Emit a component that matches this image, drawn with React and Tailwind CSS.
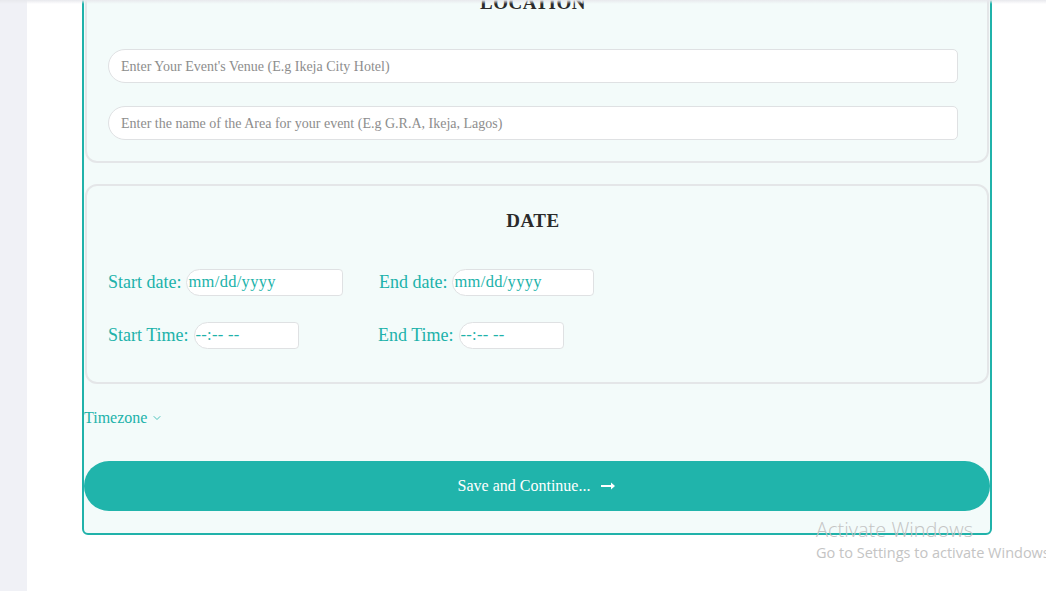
import { ChevronDown } from 'lucide-react';

const serif = { fontFamily: '"Liberation Serif", "Times New Roman", serif' };

function TextBox({ placeholder }) {
  return (
    <div className="w-[850px] h-[34px] bg-white border border-[#dfe1e3] rounded-l-[17px] rounded-r-[5px] flex items-center pl-[12px] text-[14px] text-[#8d8d8d]">
      {placeholder}
    </div>
  );
}

function Field({ label, value, inputWidth, className }) {
  return (
    <div className={`flex items-center ${className}`}>
      <span className="text-[18px] text-[#20b2aa] mr-[5px]">{label}</span>
      <div
        className="h-[27px] bg-white border border-[#dfe1e3] rounded-l-[14px] rounded-r-[4px] flex items-center pl-[1px] text-[16.5px] tracking-[0.3px] text-[#20b2aa]"
        style={{ width: inputWidth }}
      >
        {value}
      </div>
    </div>
  );
}

export default function App() {
  return (
    <div className="relative w-[1046px] h-[591px] overflow-hidden flex bg-white" style={serif}>
      <div className="w-[27px] shrink-0 bg-[#f0f1f6]" />
      <div className="flex-1 pl-[55px]">
        <div className="w-[910px] -mt-[40px] border-2 border-[#20b2aa] rounded-[6px] bg-[#f3fbfa] flex flex-col pb-[22px]">
          {/* location */}
          <section className="mx-[1px] border-2 border-[#e4e6e8] rounded-[12px] pt-[28px] pb-[21px]">
            <h2 className="pr-[8px] text-center text-[19px] leading-[22px] font-bold text-[#2b2b2b] tracking-wide">LOCATION</h2>
            <div className="mt-[35px] pl-[21px] flex flex-col gap-[23px]">
              <TextBox placeholder="Enter Your Event's Venue (E.g Ikeja City Hotel)" />
              <TextBox placeholder="Enter the name of the Area for your event (E.g G.R.A, Ikeja, Lagos)" />
            </div>
          </section>

          {/* date */}
          <section className="mx-[1px] mt-[21px] border-2 border-[#e4e6e8] rounded-[12px] pt-[24px] pb-[33px]">
            <h2 className="pr-[8px] text-center text-[19px] leading-[22px] font-bold text-[#2b2b2b] tracking-wide">DATE</h2>
            <div className="pl-[21px]">
              <div className="mt-[37px] flex items-center">
                <Field label="Start date:" value="mm/dd/yyyy" inputWidth={157} className="w-[271px]" />
                <Field label="End date:" value="mm/dd/yyyy" inputWidth={142} />
              </div>
              <div className="mt-[26px] flex items-center">
                <Field label="Start Time:" value="--:-- --" inputWidth={105} className="w-[270px]" />
                <Field label="End Time:" value="--:-- --" inputWidth={105} />
              </div>
            </div>
          </section>

          <div className="mt-[22px] flex items-center gap-[4px] text-[16px] text-[#20b2aa]">
            Timezone <ChevronDown size={12} strokeWidth={1.6} />
          </div>

          <button className="mt-[31px] h-[50px] w-full rounded-full bg-[#20b4ab] text-white text-[16px] flex items-center justify-center gap-[11px]">
            Save and Continue...
            <svg width="15" height="10" viewBox="0 0 15 10">
              <path d="M0 5h12" stroke="white" strokeWidth="2" />
              <path d="M10 1.5l4 3.5-4 3.5z" fill="white" />
            </svg>
          </button>
        </div>
      </div>

      <div className="absolute top-0 left-0 right-0 h-[4px] bg-gradient-to-b from-[#e8e9ed] to-transparent" />

      <div className="absolute left-[816px] top-[517px] text-[#c4c4c4] whitespace-nowrap" style={{ fontFamily: '"Open Sans", "Noto Sans", sans-serif' }}>
        <div className="text-[20px] leading-[26px] font-light">Activate Windows</div>
        <div className="text-[14.5px] leading-[20px]">Go to Settings to activate Windows.</div>
      </div>
    </div>
  );
}
